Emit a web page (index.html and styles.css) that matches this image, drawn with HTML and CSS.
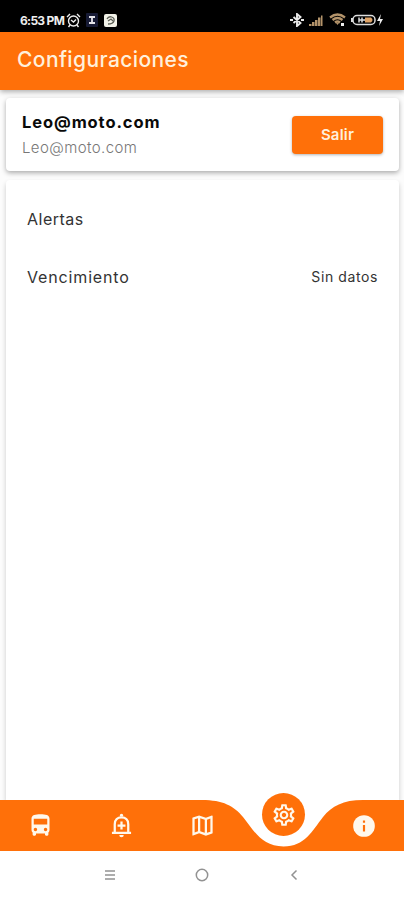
FILE: index.html
```html
<!doctype html>
<html lang="es">
<head>
<meta charset="utf-8">
<title>Configuraciones</title>
<link rel="stylesheet" href="styles.css">
</head>

<body>
<div class="app">
	<div class="status">
		<div class="status_left">
			<span class="time">6:53 PM</span>
			<svg class="alarm" width="15" height="15" viewBox="0 0 15 15"><circle cx="7.5" cy="8" r="5"/><path d="M1 4l3-3M14 4l-3-3M4 12l-1.500 2M11 12l1.500 2M5 7l2.500 2L10 6.500"/></svg>
			<svg class="app_icon" width="12" height="14" viewBox="0 0 12 14"><rect width="12" height="14" rx="1" fill="#171b35"/><path d="M3 4h6M3 10h6M6 4v6" fill="none" stroke="#e5e5ea" stroke-width="1.800"/></svg>
			<svg class="app_icon2" width="13" height="13" viewBox="0 0 13 13"><rect width="13" height="13" rx="2" fill="#f2f2e8"/><path d="M3 5c2-4 8-2 7 2-1 3-4 3-6 3M4 7l3-2 2 2" fill="none" stroke="#5a5d54" stroke-width="1.300"/></svg>
		</div>
		<div class="status_right">
			<svg width="14" height="14" viewBox="0 0 14 14"><path d="M3.500 4l7 6L7 13V1l3.500 3-7 6M0 7h3M11 7h3" fill="none" stroke="#e8e8e8" stroke-width="1.900"/></svg>
			<svg width="15" height="12" viewBox="0 0 15 12"><path d="M0 12V10h2.500v2zM3 12V8h2.500v4zM6 12V6h2.500v6zM9 12V3.500h2.500v8.500zM12 12V1.500h1.500v10.500z" fill="#b3936a"/></svg>
			<svg width="17" height="14" viewBox="0 0 17 14"><path d="M1 4.500q7.500-6 15 0M3.500 7q5-4 10 0M6 9.500q2.500-2 5 0" fill="none" stroke="#b3936a" stroke-width="2.300"/><path d="M7 10h3l-1.500 2z" fill="#b3936a"/><path d="M12 10h3v3h-3z" fill="#eee"/></svg>
			<svg width="33" height="12" viewBox="0 0 33 12"><rect x="2" y="1.500" width="22" height="9" rx="4" fill="none" stroke="#ddd" stroke-width="1.500"/><path d="M0 4h2v4H0z" fill="#ddd"/><path d="M14 3.500h6q3 2.500 0 5h-6z" fill="#e0a366"/><path d="M8 3.500v5M11 3.500v5M8 6h6" fill="none" stroke="#ddd" stroke-width="1.500"/><path d="M30 0l-4 7h3l-1 5 4-7h-3z" fill="#eee"/></svg>
		</div>
	</div>

	<div class="header"><h1 class="title">Configuraciones</h1></div>

	<div class="content">
		<div class="card user">
			<div>
				<div class="name">Leo@moto.com</div>
				<div class="email">Leo@moto.com</div>
			</div>
			<button class="exit"><span>Salir</span></button>
		</div>
		<div class="card options">
			<div class="row"><span class="alerts">Alertas</span></div>
			<div class="row"><span class="expiry">Vencimiento</span><span class="value">Sin datos</span></div>
		</div>
	</div>

	<div class="tabs">
		<svg class="tabs_bg" width="404" height="51" viewBox="0 0 404 51"><path d="M0 0H202C223 0 234 6 243 17C254 31 262 46.500 283.500 46.500C305 46.500 312 31 323 17C332 6 343 0 363 0H404V51H0z"/></svg>
		<div class="tab">
			<svg width="27" height="27" viewBox="0 0 24 24"><path d="M4 16c0 .88.39 1.670 1 2.220V20c0 .55.45 1 1 1h1c.55 0 1-.45 1-1v-1h8v1c0 .55.45 1 1 1h1c.55 0 1-.45 1-1v-1.780c.61-.55 1-1.340 1-2.220V6c0-3.500-3.580-4-8-4s-8 .5-8 4v10zm3.500 1c-.83 0-1.500-.67-1.500-1.500S6.670 14 7.500 14s1.500.67 1.500 1.500S8.330 17 7.500 17zm9 0c-.83 0-1.500-.67-1.500-1.500s.67-1.500 1.500-1.500 1.500.67 1.500 1.500-.67 1.500-1.500 1.500zm1.500-6H6V6h12v5z"/></svg>
		</div>
		<div class="tab">
			<svg width="27" height="27" viewBox="0 0 24 24"><path d="M6 18v-7.200C6 7 8.500 4.800 12 4.800s6 2.200 6 6V18M3.500 18.500h17M12 8.500v7M8.500 12h7" fill="none" stroke="#fff8ec" stroke-width="2"/><path d="M10.500 4V3a1.500 1.500 0 013 0v1zM10 20.500h4a2 2 0 01-4 0z"/></svg>
		</div>
		<div class="tab">
			<svg width="27" height="27" viewBox="0 0 24 24"><path d="M20.500 3l-.16.03L15 5.100 9 3 3.360 4.900c-.21.07-.36.25-.36.48V20.500c0 .28.22.5.5.5l.16-.03L9 18.900l6 2.100 5.640-1.900c.21-.07.36-.25.36-.48V3.500c0-.28-.22-.5-.5-.5zM10 5.470l4 1.400v11.660l-4-1.400V5.470zm-5 .99l3-1.010v11.700l-3 1.160V6.460zm14 11.080l-3 1.010V6.860l3-1.160v11.840z"/></svg>
		</div>
		<div class="tab active">
			<span class="bubble"><svg width="26" height="26" viewBox="0 0 24 24"><path d="M19.430 12.980c.04-.32.07-.64.07-.98 0-.34-.03-.66-.07-.98l2.110-1.650c.19-.15.24-.42.12-.64l-2-3.460c-.09-.16-.26-.25-.44-.25-.06 0-.12.01-.17.03l-2.490 1c-.52-.4-1.080-.73-1.690-.98l-.38-2.650C14.460 2.180 14.250 2 14 2h-4c-.25 0-.46.18-.49.42l-.38 2.650c-.61.25-1.170.59-1.690.98l-2.490-1c-.06-.02-.12-.03-.18-.03-.17 0-.34.09-.43.25l-2 3.460c-.13.22-.07.49.12.64l2.110 1.650c-.04.32-.07.65-.07.98 0 .33.03.66.07.98l-2.110 1.650c-.19.15-.24.42-.12.64l2 3.460c.09.16.26.25.44.25.06 0 .12-.01.17-.03l2.490-1c.52.4 1.080.73 1.690.98l.38 2.650c.03.24.24.42.49.42h4c.25 0 .46-.18.49-.42l.38-2.650c.61-.25 1.170-.59 1.690-.98l2.490 1c.06.02.12.03.18.03.17 0 .34-.09.43-.25l2-3.460c.12-.22.07-.49-.12-.64l-2.110-1.650zm-1.980-1.710c.04.31.05.52.05.73 0 .21-.02.43-.05.73l-.14 1.130.89.7 1.080.84-.7 1.210-1.270-.51-1.040-.42-.9.68c-.43.32-.84.56-1.250.73l-1.060.43-.16 1.130-.2 1.350h-1.400l-.19-1.350-.16-1.130-1.060-.43c-.43-.18-.83-.41-1.230-.71l-.91-.7-1.060.43-1.270.51-.7-1.210 1.080-.84.89-.7-.14-1.130c-.03-.31-.05-.54-.05-.74s.02-.43.05-.73l.14-1.130-.89-.7-1.080-.84.7-1.210 1.270.51 1.040.42.9-.68c.43-.32.84-.56 1.250-.73l1.060-.43.16-1.130.2-1.350h1.390l.19 1.350.16 1.130 1.060.43c.43.18.83.41 1.230.71l.91.7 1.060-.43 1.270-.51.7 1.210-1.070.85-.89.7.14 1.130zM12 8c-2.210 0-4 1.790-4 4s1.790 4 4 4 4-1.790 4-4-1.790-4-4-4zm0 6c-1.100 0-2-.9-2-2s.9-2 2-2 2 .9 2 2-.9 2-2 2z"/></svg></span>
		</div>
		<div class="tab">
			<svg width="26" height="26" viewBox="0 0 24 24"><path d="M12 2a10 10 0 100 20 10 10 0 000-20z"/><path class="info_mark" d="M11 7h2v2h-2zM11 11h2v6h-2z"/></svg>
		</div>
	</div>

	<div class="system">
		<svg width="12" height="12" viewBox="0 0 12 12"><path d="M1 2h10M1 6h10M1 10h10"/></svg>
		<svg width="14" height="14" viewBox="0 0 14 14"><circle cx="7" cy="7" r="5.700"/></svg>
		<svg width="12" height="12" viewBox="0 0 12 12"><path d="M8.500 1.500L4 6l4.500 4.500"/></svg>
	</div>
</div>
</body>
</html>
```
FILE: styles.css
```css
*{ padding:0; margin:0; box-sizing:border-box;}
body{ background-color:#fff; font-family:Inter,"Open Sans",sans-serif;}
svg{ display:block; flex:none;}
.app{ width:404px; height:900px; display:flex; flex-direction:column; overflow:hidden;}
.status{ height:32px; background-color:#000; display:flex; justify-content:space-between; padding:8px 20px 0; flex:none;}
.status_left,.status_right{ display:flex; align-items:center; height:24px;}
.time{ width:45px; color:#eee; font-size:12px; font-weight:700; letter-spacing:-0.7px; white-space:nowrap;}
.alarm{ margin-left:1px; fill:none; stroke:#eee; stroke-width:1.4;}
.app_icon{ margin-left:5px;}
.app_icon2{ margin-left:6px;}
.status_right{ gap:5px;}
.header{ height:58px; background-color:#ff7009; display:flex; align-items:center; padding:0 17px 3px; flex:none; box-shadow:0 2px 5px rgba(0,0,0,0.3); position:relative; z-index:2;}
.title{ color:#fff0dc; font-size:21px; font-weight:500; letter-spacing:0.4px;}
.content{ flex:1; display:flex; flex-direction:column; gap:9px; padding:8px 5px 0 6px; background-color:#fcfcfc;}
.card{ background-color:#fff; border-radius:4px;}
.user{ height:73px; display:flex; align-items:center; justify-content:space-between; padding:0 16px; box-shadow:0 2px 5px rgba(0,0,0,0.32); flex:none; position:relative; z-index:1;}
.name{ color:#0a0a0a; font-size:16.5px; line-height:25px; font-weight:700; letter-spacing:0.9px;}
.email{ color:#777; font-size:15px; line-height:25px; font-weight:300; letter-spacing:0.4px;}
.exit{ width:91px; height:38px; border:0; border-radius:4px; background-color:#ff7009; color:#fff0dc; font-family:inherit; font-size:15px; font-weight:600; letter-spacing:0.2px; box-shadow:0 1px 3px rgba(0,0,0,0.3);}
.options{ flex:1; padding:10px 21px 0; border-radius:4px 4px 0 0; box-shadow:0 3px 5px rgba(0,0,0,0.2);}
.row{ height:58px; display:flex; align-items:center; justify-content:space-between; color:#333; font-size:16px;}
.alerts{ letter-spacing:0.5px;}
.expiry{ letter-spacing:0.85px;}
.value{ font-size:14px; line-height:16px; letter-spacing:0.6px; margin-bottom:1px;}
.tabs{ height:51px; display:flex; position:relative; z-index:1; flex:none; background-color:#fff;}
.tabs_bg{ position:absolute; left:0; top:0; fill:#ff7009;}
.tab{ flex:1; display:flex; align-items:center; justify-content:center; position:relative; padding-left:1px;}
.tab svg{ fill:#fff8ec;}
.tab .info_mark{ fill:#ff7009;}
.bubble{ width:43px; height:43px; border-radius:50%; background-color:#ff7009; display:flex; align-items:center; justify-content:center; position:absolute; left:20px; top:-7px;}
.system{ height:49px; display:flex; align-items:center; justify-content:center; gap:79px; padding-bottom:1px; flex:none; background-color:#fff;}
.system svg{ fill:none; stroke:#929292; stroke-width:1.5;}
```
